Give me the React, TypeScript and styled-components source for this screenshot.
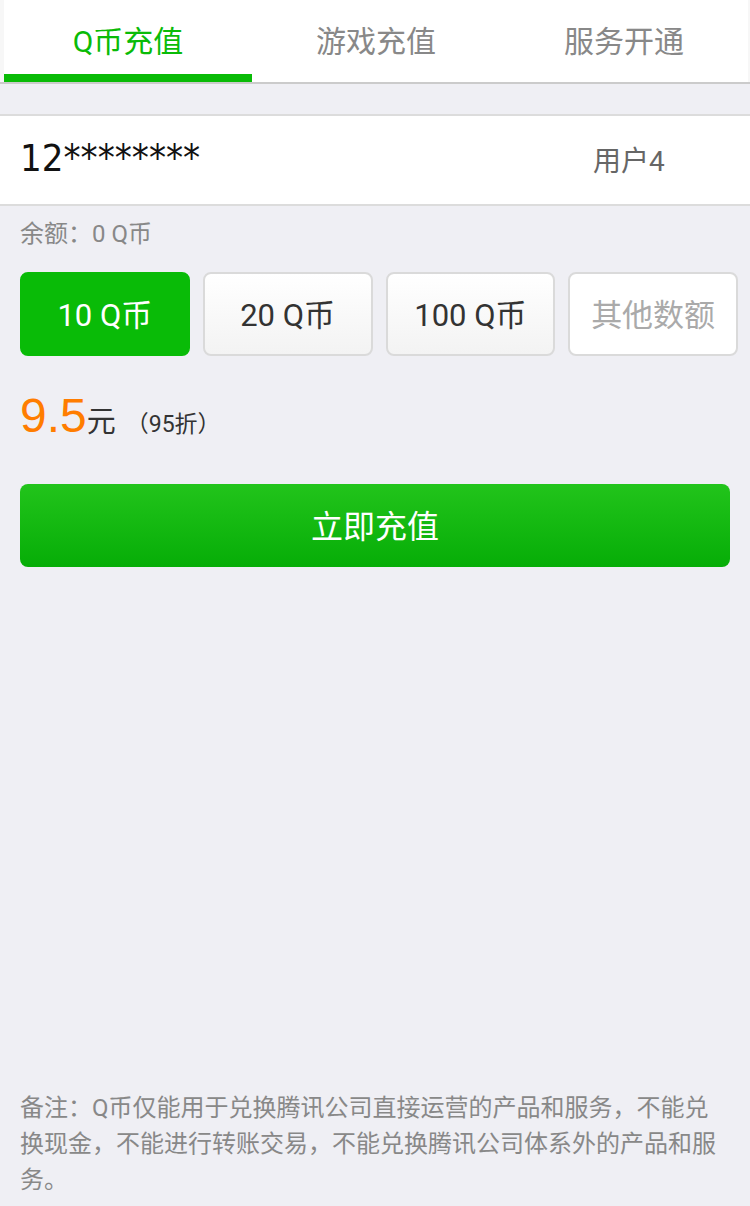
import React, { useState } from "react";
import styled, { createGlobalStyle } from "styled-components";

const GlobalStyle = createGlobalStyle`
  html, body { margin: 0; padding: 0; background: #efeff4; }
  body { font-family: "Roboto", "Noto Sans CJK SC", sans-serif; }
  * { box-sizing: border-box; }
`;

const Page = styled.div`
  min-height: 1206px;
  display: flex;
  flex-direction: column;
  background: #efeff4;
`;

const TabBar = styled.div`
  display: flex;
  height: 84px;
  padding: 0 2px 0 4px;
  background: #f7f7f7;
  border-bottom: 2px solid #cbcbcb;
`;

const Tab = styled.div<{ $active?: boolean }>`
  flex: 1;
  display: flex;
  align-items: center;
  justify-content: center;
  background: #fff;
  font-size: 30px;
  padding-bottom: 2px;
  color: ${(p) => (p.$active ? "#09bb07" : "#888")};
  border-bottom: 8px solid ${(p) => (p.$active ? "#09bb07" : "#fff")};
  padding-top: 6px;
`;

const AccountRow = styled.div`
  margin-top: 30px;
  height: 92px;
  display: flex;
  align-items: center;
  background: #fff;
  border-top: 2px solid #dcdcdc;
  border-bottom: 2px solid #dcdcdc;
  padding-left: 20px;
`;

const Account = styled.div`
  font-family: "DejaVu Sans", sans-serif;
  font-stretch: condensed;
  font-size: 38px;
  color: #111;
  flex: 1;
  padding-bottom: 4px;
`;

const Nick = styled.div`
  width: 157px;
  font-size: 28px;
  color: #666;
  padding-bottom: 2px;
`;

const Balance = styled.div`
  padding: 12px 20px 0;
  font-size: 24px;
  line-height: 32px;
  color: #888;
`;

const Amounts = styled.div`
  margin-top: 22px;
  padding: 0 12px 0 20px;
  display: grid;
  grid-template-columns: repeat(4, 1fr);
  gap: 13px;
`;

const Amount = styled.button<{ $active?: boolean; $other?: boolean }>`
  height: 84px;
  border-radius: 8px;
  font-family: "Roboto", "Noto Sans CJK SC", sans-serif;
  font-size: 31px;
  padding: 0 0 4px;
  cursor: pointer;
  border: 2px solid ${(p) => (p.$active ? "#09bb07" : "#dadada")};
  color: ${(p) => (p.$active ? "#fff" : p.$other ? "#aaa" : "#333")};
  background: ${(p) =>
    p.$active
      ? "#09bb07"
      : p.$other
      ? "#fff"
      : "linear-gradient(#ffffff, #f3f3f3)"};
`;

const PriceRow = styled.div`
  margin-top: 36px;
  padding: 0 20px;
  display: flex;
  align-items: baseline;
  height: 48px;
`;

const Price = styled.span`
  font-family: "Liberation Sans", sans-serif;
  font-size: 48px;
  line-height: 48px;
  color: #ff7d00;
`;

const Unit = styled.span`
  font-size: 29px;
  color: #333;
`;

const Discount = styled.span`
  font-size: 23px;
  color: #333;
  margin-left: 10px;
`;

const SubmitButton = styled.button`
  margin: 44px 20px 0;
  height: 83px;
  border: none;
  border-radius: 8px;
  background: linear-gradient(#22c41b, #06ad07);
  color: #fff;
  font-family: "Roboto", "Noto Sans CJK SC", sans-serif;
  font-size: 32px;
  padding: 0 0 4px;
  cursor: pointer;
`;

const Note = styled.div`
  margin-top: auto;
  padding: 0 20px 8px;
  font-size: 24px;
  line-height: 36px;
  color: #888;
`;

const tabs = ["Q币充值", "游戏充值", "服务开通"];
const amounts = ["10 Q币", "20 Q币", "100 Q币"];

export default function App() {
  const [tab, setTab] = useState(0);
  const [sel, setSel] = useState(0);
  return (
    <Page>
      <GlobalStyle />
      <TabBar>
        {tabs.map((t, i) => (
          <Tab key={t} $active={i === tab} onClick={() => setTab(i)}>
            {t}
          </Tab>
        ))}
      </TabBar>
      <AccountRow>
        <Account>12********</Account>
        <Nick>用户4</Nick>
      </AccountRow>
      <Balance>余额：0 Q币</Balance>
      <Amounts>
        {amounts.map((a, i) => (
          <Amount key={a} $active={i === sel} onClick={() => setSel(i)}>
            {a}
          </Amount>
        ))}
        <Amount $other>其他数额</Amount>
      </Amounts>
      <PriceRow>
        <Price>9.5</Price>
        <Unit>元</Unit>
        <Discount>（95折）</Discount>
      </PriceRow>
      <SubmitButton>立即充值</SubmitButton>
      <Note>
        备注：Q币仅能用于兑换腾讯公司直接运营的产品和服务，不能兑换现金，不能进行转账交易，不能兑换腾讯公司体系外的产品和服务。
      </Note>
    </Page>
  );
}
